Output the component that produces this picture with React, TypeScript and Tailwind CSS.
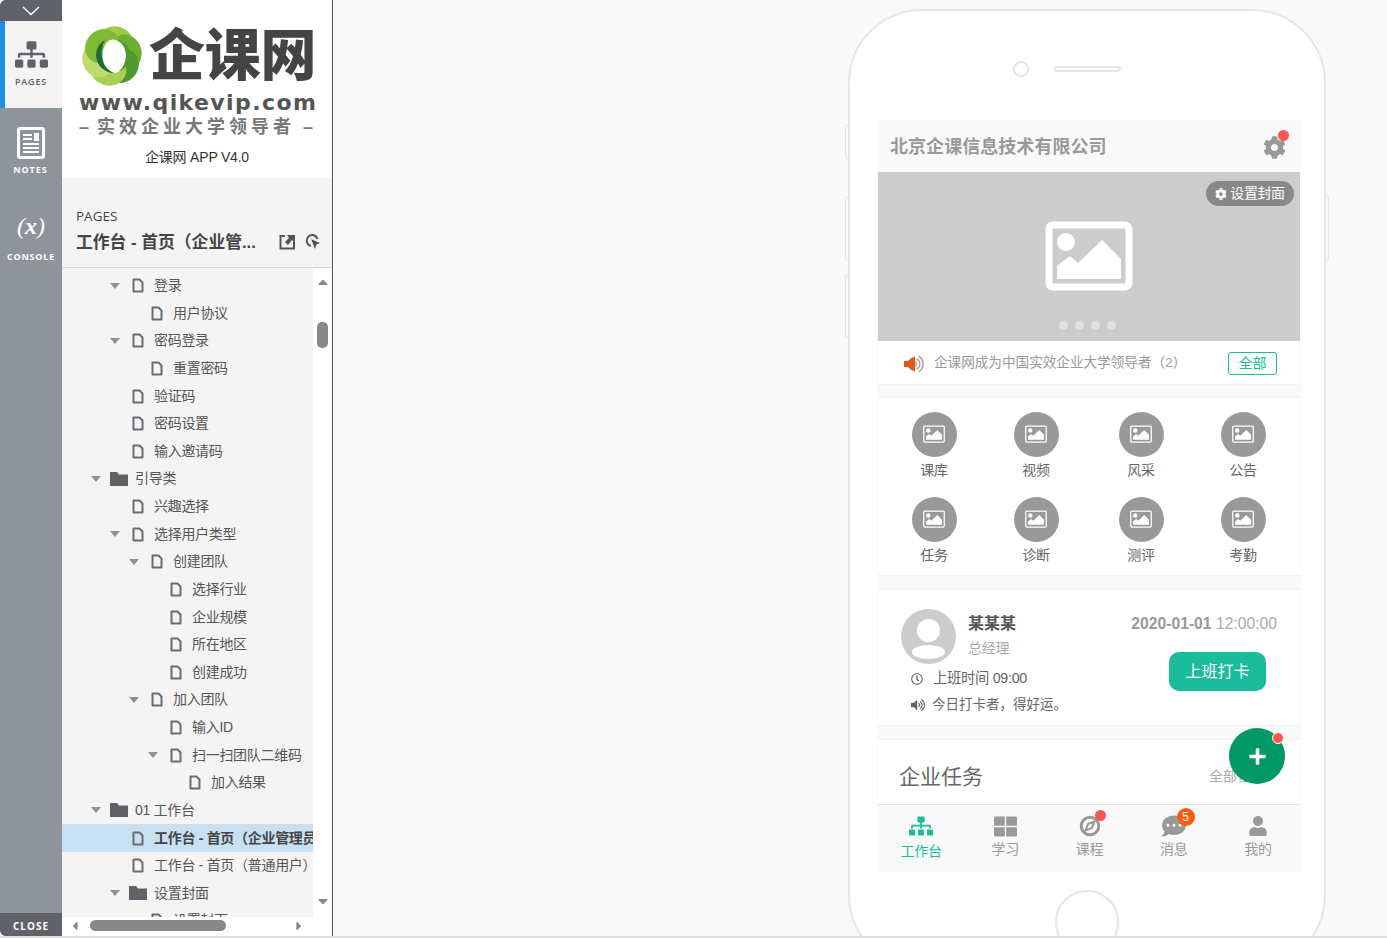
import React from "react";
import { FaCog, FaSitemap, FaThLarge, FaCommentDots, FaUser, FaVolumeUp, FaRegClock, FaPlus, FaCaretDown, FaCaretUp, FaCaretLeft, FaCaretRight } from "react-icons/fa";

const FONT = "font-['Liberation_Sans','Noto_Sans_CJK_SC',sans-serif]";

type Row = { t: string; l: number; k?: "file" | "folder"; open?: boolean; sel?: boolean };
const rows: Row[] = [
  { t: "登录", l: 2, open: true },
  { t: "用户协议", l: 3 },
  { t: "密码登录", l: 2, open: true },
  { t: "重置密码", l: 3 },
  { t: "验证码", l: 2 },
  { t: "密码设置", l: 2 },
  { t: "输入邀请码", l: 2 },
  { t: "引导类", l: 1, k: "folder", open: true },
  { t: "兴趣选择", l: 2 },
  { t: "选择用户类型", l: 2, open: true },
  { t: "创建团队", l: 3, open: true },
  { t: "选择行业", l: 4 },
  { t: "企业规模", l: 4 },
  { t: "所在地区", l: 4 },
  { t: "创建成功", l: 4 },
  { t: "加入团队", l: 3, open: true },
  { t: "输入ID", l: 4 },
  { t: "扫一扫团队二维码", l: 4, open: true },
  { t: "加入结果", l: 5 },
  { t: "01 工作台", l: 1, k: "folder", open: true },
  { t: "工作台 - 首页（企业管理员）", l: 2, sel: true },
  { t: "工作台 - 首页（普通用户）", l: 2 },
  { t: "设置封面", l: 2, k: "folder", open: true },
  { t: "设置封面", l: 3 },
];

function FileIcon() {
  return (
    <svg width="12" height="15" viewBox="0 0 12 15" className="shrink-0">
      <path d="M1.500 1.500H7.500L10.500 4.500V13.500H1.500Z" fill="none" stroke="#6a6d72" strokeWidth="2" strokeLinejoin="round" />
    </svg>
  );
}

function FolderIcon() {
  return (
    <svg width="18" height="14" viewBox="0 0 18 14" className="shrink-0">
      <path d="M0 0H7L9 2.500H18V14H0Z" fill="#5f6368" />
    </svg>
  );
}

function TreeRow({ r }: { r: Row }) {
  const folder = r.k === "folder";
  return (
    <div
      className={`h-[27.63px] flex items-center shrink-0 whitespace-nowrap text-[14px] tracking-[-0.3px] ${r.sel ? "bg-[#c8e0f2] font-bold text-[#444]" : "text-[#555]"}`}
      style={{ paddingLeft: 29 + (r.l - 1) * 19 }}
    >
      <span className="w-[13px] shrink-0 flex justify-start">
        {r.open && <span className="w-0 h-0 border-x-[5px] border-x-transparent border-t-[6px] border-t-[#909090]" />}
      </span>
      <span className={`${folder ? "w-[26px] pl-[6px]" : "w-[23px] pl-[9px]"} shrink-0 flex box-content`}>
        {folder ? <FolderIcon /> : <FileIcon />}
      </span>
      <span className="ml-[-1px]">{r.t}</span>
    </div>
  );
}

function Logo() {
  const petals = [0, 60, 120, 180, 240, 300];
  const cols = ["#9ccb4a", "#6fae2e", "#4f9a2d", "#a6cf55", "#c2da6b", "#7fbb35"];
  return (
    <svg width="66" height="66" viewBox="0 0 66 66" className="shrink-0">
      {petals.map((a, i) => (
        <ellipse key={a} cx="33" cy="19" rx="18" ry="16" fill={cols[i]} transform={`rotate(${a + 15} 33 33)`} />
      ))}
      <path d="M47 32C47 43 42 50 35 50C27 48 22 38 24 28C26 19 31 15 37 17C43 19 47 25 47 32Z" fill="#fff" />
      <path d="M23 34C24 42 28 47 35 50C27 50 18 44 17 33C17 26 20 20 26 17C23 22 22 28 23 34Z" fill="#1f6b3a" />
      <path d="M47 32C47 25 43 19 37 17C44 17 51 23 51 32C51 40 46 46 39 49C44 45 47 39 47 32Z" fill="#4c9a2f" />
    </svg>
  );
}

function ImgIcon({ w, h, b }: { w: number; h: number; b: number }) {
  return (
    <svg width={w} height={h} viewBox="0 0 88 70">
      <rect x={b / 2 + 0.5} y={b / 2 + 0.5} width={87 - b} height={69 - b} rx="4" fill="none" stroke="#fff" strokeWidth={b} />
      <circle cx="21" cy="21" r="9" fill="#fff" />
      <path d="M12 58V45L25 35L33 42L57 19L76 38V58Z" fill="#fff" />
    </svg>
  );
}

function Grid() {
  const data = [
    ["课库", "视频", "风采", "公告"],
    ["任务", "诊断", "测评", "考勤"],
  ];
  const cols = ["w-[102px]", "w-[105px]", "w-[102px]", "w-[45px]"];
  return (
    <div className="h-[179px] bg-white pt-[14px] pl-[33.500px] flex flex-col gap-[16.5px] border-y border-[#f2f2f2]">
      {data.map((row, i) => (
        <div key={i} className="flex h-[68px]">
          {row.map((t, j) => (
            <div key={t} className={cols[j]}>
              <div className="w-[45px] flex flex-col items-center">
                <div className="w-[45px] h-[45px] rounded-full bg-[#999] flex items-center justify-center shrink-0 pb-[1px]">
                  <ImgIcon w={22} h={18} b={5} />
                </div>
                <div className="mt-[3px] text-[14px] leading-[20px] tracking-[-0.3px] text-[#666] whitespace-nowrap">{t}</div>
              </div>
            </div>
          ))}
        </div>
      ))}
    </div>
  );
}

function CourseIcon() {
  return (
    <svg width="22" height="22" viewBox="0 0 22 22">
      <circle cx="11" cy="11" r="8.800" fill="none" stroke="#999" strokeWidth="3" />
      <path d="M15.500 6.500L12.800 13L6.500 15.500L9 9Z" fill="none" stroke="#999" strokeWidth="2" />
    </svg>
  );
}

function Tab({ icon, label, active, children }: { icon: React.ReactNode; label: string; active?: boolean; children?: React.ReactNode }) {
  return (
    <div className={`w-[84.4px] flex flex-col items-center ${active ? "text-[#1abc9c]" : "text-[#999]"}`}>
      <div className="relative h-[24px] w-[24px] flex items-center justify-center">
        {icon}
        {children}
      </div>
      <div className={`text-[14px] leading-[20px] tracking-[-0.3px] whitespace-nowrap ${active ? "mt-[3px]" : "mt-[1px]"}`}>{label}</div>
    </div>
  );
}

export default function App() {
  return (
    <div className={`${FONT} w-[1387px] h-[938px] overflow-hidden flex bg-[#f9f9f9] border-b-2 border-[#dedede]`}>
      {/* Left rail */}
      <div className="w-[62px] h-full shrink-0 bg-[#8f949b] flex flex-col rounded-l-[6px] overflow-hidden font-['Open_Sans','Liberation_Sans',sans-serif]">
        <div className="h-[21px] bg-[#5f6268] flex items-center justify-center">
          <svg width="18" height="10" viewBox="0 0 18 10"><path d="M1 1L9 8.500L17 1" fill="none" stroke="#fff" strokeWidth="1.400" /></svg>
        </div>
        <div className="h-[87px] bg-[#f4f4f4] border-l-[5px] border-[#1a8fe3] flex flex-col items-center pr-[5px] pt-[17px] text-[#5f6368]">
          <FaSitemap size={33} />
          <div className="mt-[5px] text-[9px] leading-[12px] font-semibold tracking-[0.8px]">PAGES</div>
        </div>
        <div className="h-[88px] flex flex-col items-center pt-[19px] pr-[1px] text-white">
          <svg width="28" height="32" viewBox="0 0 28 32">
            <rect x="0" y="0" width="28" height="32" rx="3" fill="#fff" />
            <rect x="3" y="3" width="22" height="26" fill="#8f949b" />
            <path d="M6 7H15V9H6ZM6 11H15V13H6ZM17 6H22V14H17ZM6 16H22V18H6ZM6 20H22V22H6ZM6 24H22V26H6Z" fill="#fff" />
          </svg>
          <div className="mt-[5px] text-[9px] leading-[12px] font-bold tracking-[1px]">NOTES</div>
        </div>
        <div className="h-[69px] flex flex-col items-center text-white pt-[16px]">
          <div className="font-['Liberation_Serif',serif] italic text-[24px] leading-[28px]">(<span className="font-bold">x</span>)</div>
          <div className="mt-[11px] text-[9px] leading-[12px] font-bold tracking-[0.8px]">CONSOLE</div>
        </div>
        <div className="flex-1" />
        <div className="h-[23px] bg-[#5f6268] text-white text-[10px] font-bold tracking-[1px] flex items-center justify-center pt-[3px]">CLOSE</div>
      </div>

      {/* Left panel */}
      <div className="w-[271px] h-full shrink-0 bg-white border-r border-[#555] flex flex-col">
        <div className="h-[178px] shrink-0 flex flex-col pl-[17px] pt-[23px]">
          <div className="flex items-center h-[66px]">
            <Logo />
            <div className="ml-[4px] text-[56px] leading-[60px] font-black text-[#444] whitespace-nowrap tracking-[-0.3px]">企课网</div>
          </div>
          <div className="font-['DejaVu_Sans',sans-serif] font-bold text-[22px] leading-[24px] text-[#555] whitespace-nowrap mt-[2px] tracking-[1.4px] w-[240px]">www.qikevip.com</div>
          <div className="flex text-[18px] leading-[20px] font-bold text-[#777] whitespace-nowrap mt-[2px] tracking-[4px]">
            <span className="w-[18px] tracking-normal">–</span>
            <span className="w-[206px]">实效企业大学领导者</span>
            <span className="tracking-normal">–</span>
          </div>
          <div className="text-[14px] leading-[20px] text-[#333] text-center w-[240px] mt-[10px] ml-[-2px] tracking-[-0.2px]">企课网 APP V4.0</div>
        </div>
        <div className="h-[90px] shrink-0 bg-[#f4f4f4] border-b border-[#d8d8d8] pl-[14px] pt-[29px] relative">
          <div className="font-['Open_Sans',sans-serif] text-[13.5px] leading-[18px] text-[#444]">PAGES</div>
          <div className="flex items-center h-[26px] mt-[4px]">
            <div className="text-[16.8px] font-bold text-[#444] w-[203px] whitespace-nowrap overflow-hidden pt-[1px]">工作台 - 首页（企业管...</div>
            <svg width="17" height="16" viewBox="0 0 17 16">
              <path d="M6 2H1.500V14.500H15V8" fill="none" stroke="#555" strokeWidth="2" />
              <path d="M8 1H16V9L13 6L9 11L6 8L10 4Z" fill="#555" />
            </svg>
            <svg width="16" height="16" viewBox="0 0 16 16" className="ml-[9px]">
              <path d="M12.500 5A5.500 5.500 0 1 0 6 12" fill="none" stroke="#555" strokeWidth="2" />
              <path d="M6 5L15 9L11.500 10.500L10 15Z" fill="#555" />
            </svg>
          </div>
        </div>
        <div className="flex-1 min-h-0 flex">
          <div className="w-[251px] bg-[#f4f4f4] overflow-hidden flex flex-col pt-[3.8px]">
            {rows.map((r, i) => <TreeRow key={i} r={r} />)}
          </div>
          <div className="w-[19px] flex flex-col items-center text-[#888]">
            <FaCaretUp size={16} className="mt-[6px]" />
            <div className="w-[11px] h-[26px] bg-[#888] rounded-[5px] mt-[32px] mr-[1px]" />
            <div className="flex-1" />
            <FaCaretDown size={16} className="mb-[8px]" />
          </div>
        </div>
        <div className="h-[19px] shrink-0 flex items-center text-[#888] pb-[2px]">
          <FaCaretLeft size={14} className="ml-[6px]" />
          <div className="w-[136px] h-[11px] bg-[#888] rounded-[6px] ml-[8px]" />
          <div className="flex-1" />
          <FaCaretRight size={14} className="mr-[26px]" />
        </div>
      </div>

      {/* Preview area */}
      <div className="flex-1 min-w-0 h-full pl-[515px] pt-[9px] relative">
        <div className="relative w-[478px] h-[960px] bg-white border-2 border-[#e6e6e6] rounded-[74px] flex flex-col">
          {/* side buttons */}
          <div className="absolute left-[-5px] top-[114px] w-[3px] h-[34px] border border-r-0 border-[#e6e6e6] rounded-l-[2px]" />
          <div className="absolute left-[-5px] top-[186px] w-[3px] h-[63px] border border-r-0 border-[#e6e6e6] rounded-l-[2px]" />
          <div className="absolute left-[-5px] top-[264px] w-[3px] h-[63px] border border-r-0 border-[#e6e6e6] rounded-l-[2px]" />
          <div className="absolute right-[-5px] top-[185px] w-[3px] h-[65px] border border-l-0 border-[#e6e6e6] rounded-r-[2px]" />

          <div className="h-[109px] shrink-0 flex items-start pt-[50px] pl-[163px]">
            <div className="w-[16px] h-[16px] rounded-full border-2 border-[#e6e6e6]" />
            <div className="w-[67px] h-[6px] rounded-full border-2 border-[#e6e6e6] ml-[25px] mt-[5px]" />
          </div>

          {/* Screen */}
          <div className="relative ml-[27px] w-[424px] h-[752px] bg-[#f9f9f9] shrink-0 rounded-[3px]">
            <div className="h-[52px] flex items-center justify-between pl-[13px] pr-[15px]">
              <div className="text-[18px] font-bold text-[#999] tracking-[0.05px] pt-[3px]">北京企课信息技术有限公司</div>
              <div className="relative text-[#999] pt-[2px]">
                <FaCog size={23} />
                <div className="absolute right-[-3px] top-[-4px] w-[11px] h-[11px] rounded-full bg-[#ff5555]" />
              </div>
            </div>
            <div className="relative mx-[1px] h-[169px] bg-[#ccc] flex items-center justify-center pb-[2px]">
              <ImgIcon w={88} h={70} b={7} />
              <div className="absolute right-[6px] top-[9px] h-[25px] w-[88px] rounded-full bg-[#888] text-white flex items-center justify-center gap-[3px] text-[14px] tracking-[-0.4px]">
                <FaCog size={12} />
                <span>设置封面</span>
              </div>
              <div className="absolute bottom-[11px] left-[181px] flex gap-[7px]">
                <div className="w-[9px] h-[9px] rounded-full bg-[#e0e0e0]" />
                <div className="w-[9px] h-[9px] rounded-full bg-[#e0e0e0]" />
                <div className="w-[9px] h-[9px] rounded-full bg-[#e0e0e0]" />
                <div className="w-[9px] h-[9px] rounded-full bg-[#e0e0e0]" />
              </div>
            </div>
            <div className="mx-[1px] h-[44px] bg-white border-b border-[#f2f2f2] flex items-center pl-[26px] pr-[23px] pt-[2px]">
              <span className="relative w-[20px] h-[18px] shrink-0 flex items-center">
                <FaVolumeUp size={20} className="text-[#aaa]" />
                <svg width="12" height="16" viewBox="0 0 12 16" className="absolute left-0 top-[1px]"><path d="M0 5H4L11 0V16L4 11H0Z" fill="#e8561f" /></svg>
              </span>
              <span className="ml-[10px] text-[13.6px] text-[#999] whitespace-nowrap">企课网成为中国实效企业大学领导者（2）</span>
              <span className="ml-auto w-[49px] h-[23px] rounded-[3px] border border-[#1abc9c] text-[#1abc9c] text-[14px] flex items-center justify-center">全部</span>
            </div>
            <div className="mx-[1px] mt-[12px]"><Grid /></div>

            <div className="mx-[1px] mt-[13px] h-[137px] bg-white border-y border-[#f2f2f2] pl-[23px] pr-[23px] flex flex-col">
              <div className="flex h-[62px] pt-[19px]">
                <div className="relative w-[55px] h-[55px] rounded-full bg-[#ccc] overflow-hidden shrink-0">
                  <div className="absolute left-[16px] top-[10px] w-[23px] h-[23px] rounded-full bg-white" />
                  <div className="absolute left-[11px] top-[36px] w-[33px] h-[14px] rounded-[50%] bg-white" />
                </div>
                <div className="ml-[12px] flex-1">
                  <div className="text-[16px] leading-[24px] font-bold text-[#555] mt-[3px]">某某某</div>
                  <div className="text-[14px] leading-[22px] text-[#aaa] mt-[1px] tracking-[-0.2px]">总经理</div>
                </div>
                <div className="text-[15.7px] leading-[24px] text-[#aaa] whitespace-nowrap mt-[3px]">
                  <span className="font-bold text-[#999]">2020-01-01</span> 12:00:00
                </div>
              </div>
              <div className="flex">
                <div className="flex-1">
                  <div className="flex items-center h-[26px] mt-[14px] pl-[10px] text-[#666] text-[14.3px] tracking-[-0.3px]">
                    <FaRegClock size={12} className="shrink-0" />
                    <span className="ml-[10px] whitespace-nowrap">上班时间 09:00</span>
                  </div>
                  <div className="flex items-center h-[26px] pl-[10px] text-[#666] text-[13.5px]">
                    <FaVolumeUp size={14} className="shrink-0" />
                    <span className="ml-[7px] whitespace-nowrap">今日打卡者，得好运。</span>
                  </div>
                </div>
                <div className="w-[97px] h-[39px] mr-[11px] rounded-[10px] bg-[#1abc9c] text-white text-[16px] flex items-center justify-center">上班打卡</div>
              </div>
            </div>

            <div className="mx-[1px] mt-[13px] h-[66px] bg-white border-t border-[#f2f2f2] border-b border-b-[#e2e2e2] flex items-center pl-[21px] pt-[9px]">
              <span className="text-[21px] text-[#666] whitespace-nowrap">企业任务</span>
              <span className="ml-[226px] text-[14px] text-[#aaa] whitespace-nowrap">全部任务</span>
            </div>

            <div className="h-[67px] flex pt-[9px] mx-[1px] pl-[1px]">
              <Tab icon={<FaSitemap size={24} />} label="工作台" active />
              <Tab icon={<FaThLarge size={23} />} label="学习" />
              <Tab icon={<CourseIcon />} label="课程">
                <div className="absolute right-[-4px] top-[-4px] w-[11px] h-[11px] rounded-full bg-[#ff5555]" />
              </Tab>
              <Tab icon={<FaCommentDots size={24} />} label="消息">
                <div className="absolute left-[15px] top-[-6px] w-[18px] h-[18px] rounded-full bg-[#ff5a10] text-white text-[12px] flex items-center justify-center">5</div>
              </Tab>
              <Tab icon={<FaUser size={20} />} label="我的" />
            </div>

            <div className="absolute left-[352px] top-[608px] w-[56px] h-[56px] rounded-full bg-[#009966] text-white flex items-center justify-center">
              <FaPlus size={19} />
              <div className="absolute right-[1px] top-[4px] w-[12px] h-[12px] rounded-full bg-[#ff5555] border border-white" />
            </div>
          </div>

          <div className="mt-[18px] ml-[205px] w-[64px] h-[64px] rounded-full border-2 border-[#e6e6e6] shrink-0" />
        </div>
      </div>
    </div>
  );
}
